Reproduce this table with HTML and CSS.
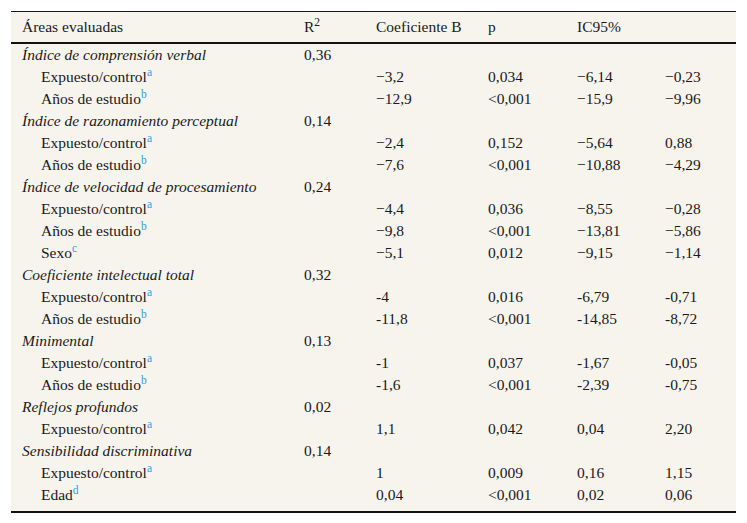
FILE: index.html
```html
<!DOCTYPE html>
<html lang="es">
<head>
<meta charset="utf-8">
<title>Tabla</title>
<link rel="stylesheet" href="styles.css">
</head>
<body>
<div class="wrap">
<table class="tbl">
<colgroup>
<col class="c1"><col class="c2"><col class="c3"><col class="c4"><col class="c5"><col class="c6">
</colgroup>
<thead>
<tr><th>Áreas evaluadas</th><th>R<sup class="sq">2</sup></th><th>Coeficiente B</th><th>p</th><th colspan="2">IC95%</th></tr>
</thead>
<tbody>
<tr><td class="grp">Índice de comprensión verbal</td><td>0,36</td><td></td><td></td><td></td><td></td></tr>
<tr><td class="ind">Expuesto/control<sup class="ref">a</sup></td><td></td><td>−3,2</td><td>0,034</td><td>−6,14</td><td>−0,23</td></tr>
<tr><td class="ind">Años de estudio<sup class="ref">b</sup></td><td></td><td>−12,9</td><td>&lt;0,001</td><td>−15,9</td><td>−9,96</td></tr>
<tr><td class="grp">Índice de razonamiento perceptual</td><td>0,14</td><td></td><td></td><td></td><td></td></tr>
<tr><td class="ind">Expuesto/control<sup class="ref">a</sup></td><td></td><td>−2,4</td><td>0,152</td><td>−5,64</td><td>0,88</td></tr>
<tr><td class="ind">Años de estudio<sup class="ref">b</sup></td><td></td><td>−7,6</td><td>&lt;0,001</td><td>−10,88</td><td>−4,29</td></tr>
<tr><td class="grp">Índice de velocidad de procesamiento</td><td>0,24</td><td></td><td></td><td></td><td></td></tr>
<tr><td class="ind">Expuesto/control<sup class="ref">a</sup></td><td></td><td>−4,4</td><td>0,036</td><td>−8,55</td><td>−0,28</td></tr>
<tr><td class="ind">Años de estudio<sup class="ref">b</sup></td><td></td><td>−9,8</td><td>&lt;0,001</td><td>−13,81</td><td>−5,86</td></tr>
<tr><td class="ind">Sexo<sup class="ref">c</sup></td><td></td><td>−5,1</td><td>0,012</td><td>−9,15</td><td>−1,14</td></tr>
<tr><td class="grp">Coeficiente intelectual total</td><td>0,32</td><td></td><td></td><td></td><td></td></tr>
<tr><td class="ind">Expuesto/control<sup class="ref">a</sup></td><td></td><td>-4</td><td>0,016</td><td>-6,79</td><td>-0,71</td></tr>
<tr><td class="ind">Años de estudio<sup class="ref">b</sup></td><td></td><td>-11,8</td><td>&lt;0,001</td><td>-14,85</td><td>-8,72</td></tr>
<tr><td class="grp">Minimental</td><td>0,13</td><td></td><td></td><td></td><td></td></tr>
<tr><td class="ind">Expuesto/control<sup class="ref">a</sup></td><td></td><td>-1</td><td>0,037</td><td>-1,67</td><td>-0,05</td></tr>
<tr><td class="ind">Años de estudio<sup class="ref">b</sup></td><td></td><td>-1,6</td><td>&lt;0,001</td><td>-2,39</td><td>-0,75</td></tr>
<tr><td class="grp">Reflejos profundos</td><td>0,02</td><td></td><td></td><td></td><td></td></tr>
<tr><td class="ind">Expuesto/control<sup class="ref">a</sup></td><td></td><td>1,1</td><td>0,042</td><td>0,04</td><td>2,20</td></tr>
<tr><td class="grp">Sensibilidad discriminativa</td><td>0,14</td><td></td><td></td><td></td><td></td></tr>
<tr><td class="ind">Expuesto/control<sup class="ref">a</sup></td><td></td><td>1</td><td>0,009</td><td>0,16</td><td>1,15</td></tr>
<tr class="last"><td class="ind">Edad<sup class="ref">d</sup></td><td></td><td>0,04</td><td>&lt;0,001</td><td>0,02</td><td>0,06</td></tr>
</tbody>
</table>
</div>
</body>
</html>
```

FILE: styles.css
```css
html, body {
  margin: 0;
  padding: 0;
  background: #ffffff;
}
.wrap {
  padding: 11px 11px 0 11px;
}
.tbl {
  width: 725px;
  table-layout: fixed;
  border-collapse: collapse;
  background: #f7f4ee;
  font-family: "Liberation Serif", Tinos, "Times New Roman", "DejaVu Serif", serif;
  font-size: 15.5px;
  color: #1a1a1a;
  border-top: 1px solid #1a1a1a;
  border-bottom: 2px solid #111111;
}
.c1 { width: 282px; }
.c2 { width: 72px; }
.c3 { width: 112px; }
.c4 { width: 89px; }
.c5 { width: 88px; }
.c6 { width: 82px; }
.tbl th {
  font-weight: normal;
  text-align: left;
  height: 30px;
  padding: 0 0 0 11px;
  line-height: 30px;
  vertical-align: middle;
  border-bottom: 2px solid #111111;
  white-space: nowrap;
}
.tbl td {
  height: 22px;
  padding: 0 0 0 11px;
  line-height: 22px;
  vertical-align: middle;
  white-space: nowrap;
}
.tbl td.grp {
  font-style: italic;
}
.tbl td.ind {
  padding-left: 30px;
}
.tbl tr.last td {
  padding-bottom: 5px;
}
sup {
  line-height: 0;
}
.sq {
  font-size: 11.5px;
  vertical-align: 6px;
}
.ref {
  color: #2f9fe0;
  font-size: 11.5px;
  vertical-align: 6px;
}
```
